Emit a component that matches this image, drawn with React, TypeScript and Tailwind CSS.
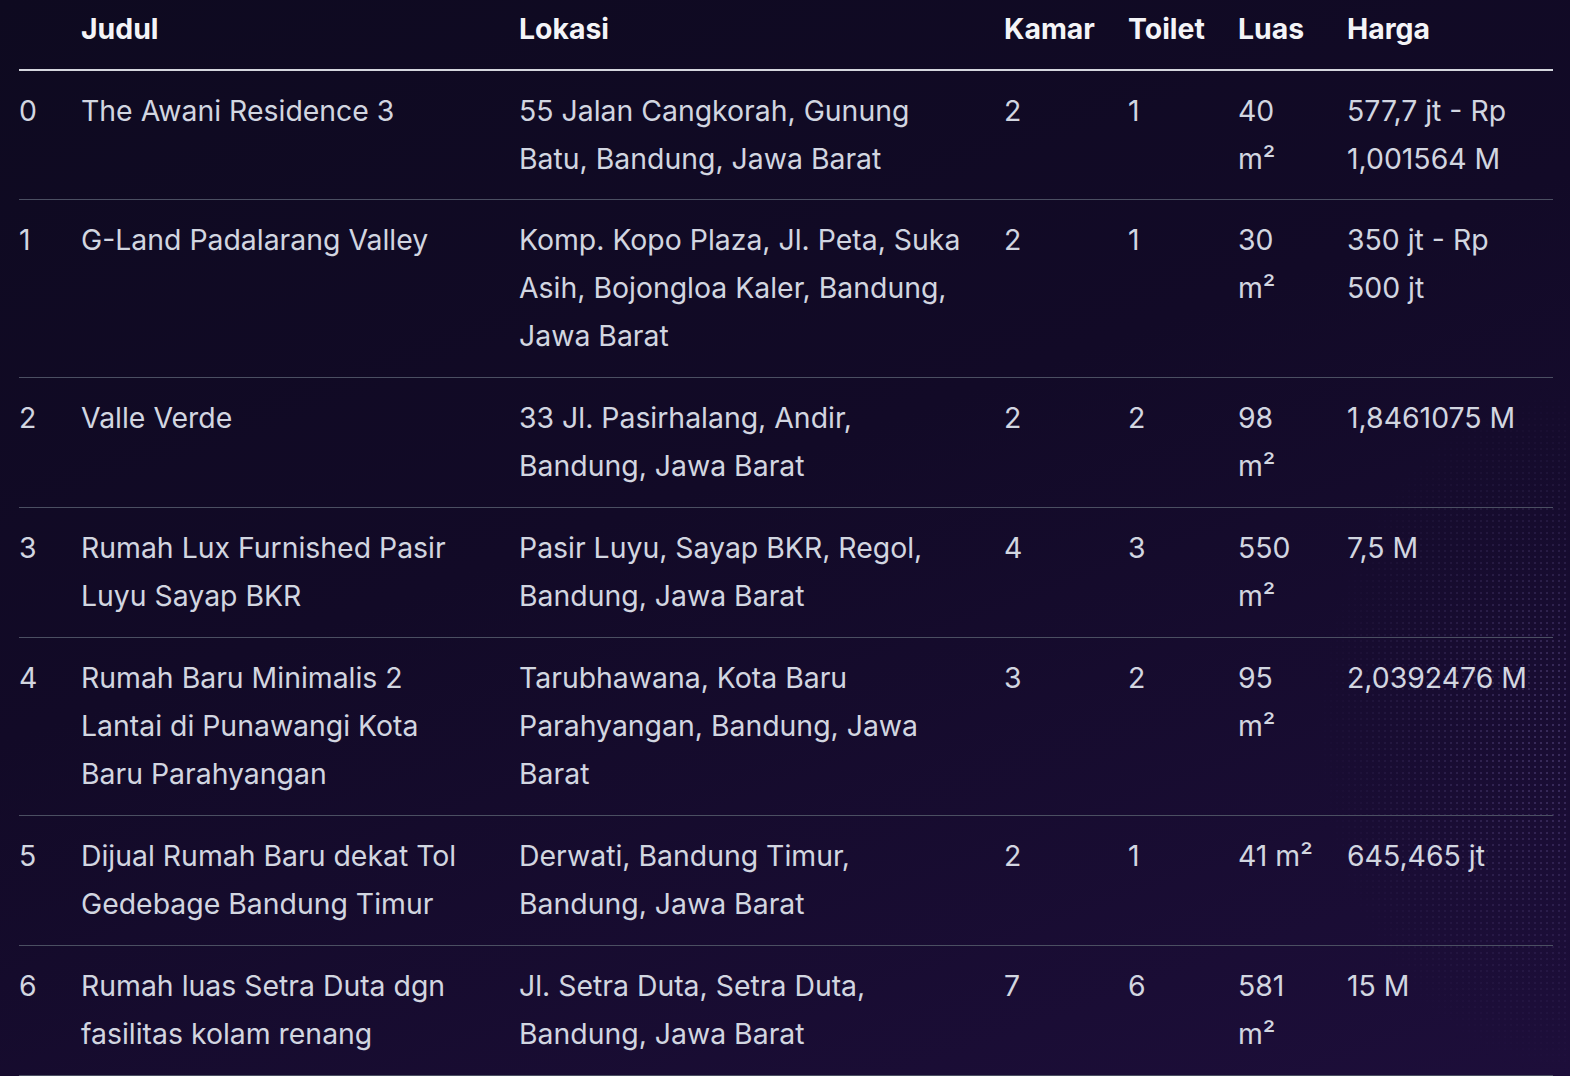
import React from 'react';

type Row = {
  judul: string;
  lokasi: string;
  kamar: number;
  toilet: number;
  luas: string;
  harga: string;
};

const rows: Row[] = [
  { judul: 'The Awani Residence 3', lokasi: '55 Jalan Cangkorah, Gunung Batu, Bandung, Jawa Barat', kamar: 2, toilet: 1, luas: '40 m²', harga: '577,7 jt - Rp 1,001564 M' },
  { judul: 'G-Land Padalarang Valley', lokasi: 'Komp. Kopo Plaza, Jl. Peta, Suka Asih, Bojongloa Kaler, Bandung, Jawa Barat', kamar: 2, toilet: 1, luas: '30 m²', harga: '350 jt - Rp 500 jt' },
  { judul: 'Valle Verde', lokasi: '33 Jl. Pasirhalang, Andir, Bandung, Jawa Barat', kamar: 2, toilet: 2, luas: '98 m²', harga: '1,8461075 M' },
  { judul: 'Rumah Lux Furnished Pasir Luyu Sayap BKR', lokasi: 'Pasir Luyu, Sayap BKR, Regol, Bandung, Jawa Barat', kamar: 4, toilet: 3, luas: '550 m²', harga: '7,5 M' },
  { judul: 'Rumah Baru Minimalis 2 Lantai di Punawangi Kota Baru Parahyangan', lokasi: 'Tarubhawana, Kota Baru Parahyangan, Bandung, Jawa Barat', kamar: 3, toilet: 2, luas: '95 m²', harga: '2,0392476 M' },
  { judul: 'Dijual Rumah Baru dekat Tol Gedebage Bandung Timur', lokasi: 'Derwati, Bandung Timur, Bandung, Jawa Barat', kamar: 2, toilet: 1, luas: '41 m²', harga: '645,465 jt' },
  { judul: 'Rumah luas Setra Duta dgn fasilitas kolam renang', lokasi: 'Jl. Setra Duta, Setra Duta, Bandung, Jawa Barat', kamar: 7, toilet: 6, luas: '581 m²', harga: '15 M' },
];

const headers = ['', 'Judul', 'Lokasi', 'Kamar', 'Toilet', 'Luas', 'Harga'];

export default function App() {
  return (
    <div
      className="relative min-h-[1076px] overflow-hidden bg-[linear-gradient(160deg,#0e0a20_0%,#120a27_45%,#1d0e3a_100%)] pl-[19px] pr-[17px] text-[28.4px] leading-[48px] text-[#d2d6e0]"
      style={{ fontFamily: 'Inter, "Noto Sans", sans-serif' }}
    >
      <div className="pointer-events-none absolute right-0 top-[380px] h-[700px] w-[260px] bg-[radial-gradient(rgba(170,150,230,0.22)_1px,transparent_1.2px)] bg-[size:6px_6px] [mask-image:radial-gradient(ellipse_at_right,black_10%,transparent_70%)]" />
      <table className="relative w-full table-fixed border-collapse">
        <colgroup>
          <col className="w-[45px]" />
          <col className="w-[438px]" />
          <col className="w-[485px]" />
          <col className="w-[124px]" />
          <col className="w-[110px]" />
          <col className="w-[109px]" />
          <col />
        </colgroup>
        <thead>
          <tr className="border-b-2 border-[#d4d6dd]">
            {headers.map((h, i) => (
              <th
                key={i}
                className={`pt-[5px] pb-4 text-left font-bold text-[#f4f4f7] ${i === 0 ? 'pl-0 pr-[17px]' : 'px-[17px]'}`}
              >
                {h}
              </th>
            ))}
          </tr>
        </thead>
        <tbody>
          {rows.map((r, i) => {
            const pad = i === 0 ? 'pt-4 pb-4' : 'pt-4 pb-[17px]';
            return (
              <tr key={i} className="border-b border-[#4b4f62] align-top">
                <td className={`${pad} pl-0 pr-[17px]`}>{i}</td>
                <td className={`${pad} px-[17px]`}>{r.judul}</td>
                <td className={`${pad} px-[17px]`}>{r.lokasi}</td>
                <td className={`${pad} px-[17px]`}>{r.kamar}</td>
                <td className={`${pad} px-[17px]`}>{r.toilet}</td>
                <td className={`${pad} px-[17px]`}>{r.luas}</td>
                <td className={`${pad} px-[17px]`}>{r.harga}</td>
              </tr>
            );
          })}
        </tbody>
      </table>
    </div>
  );
}
